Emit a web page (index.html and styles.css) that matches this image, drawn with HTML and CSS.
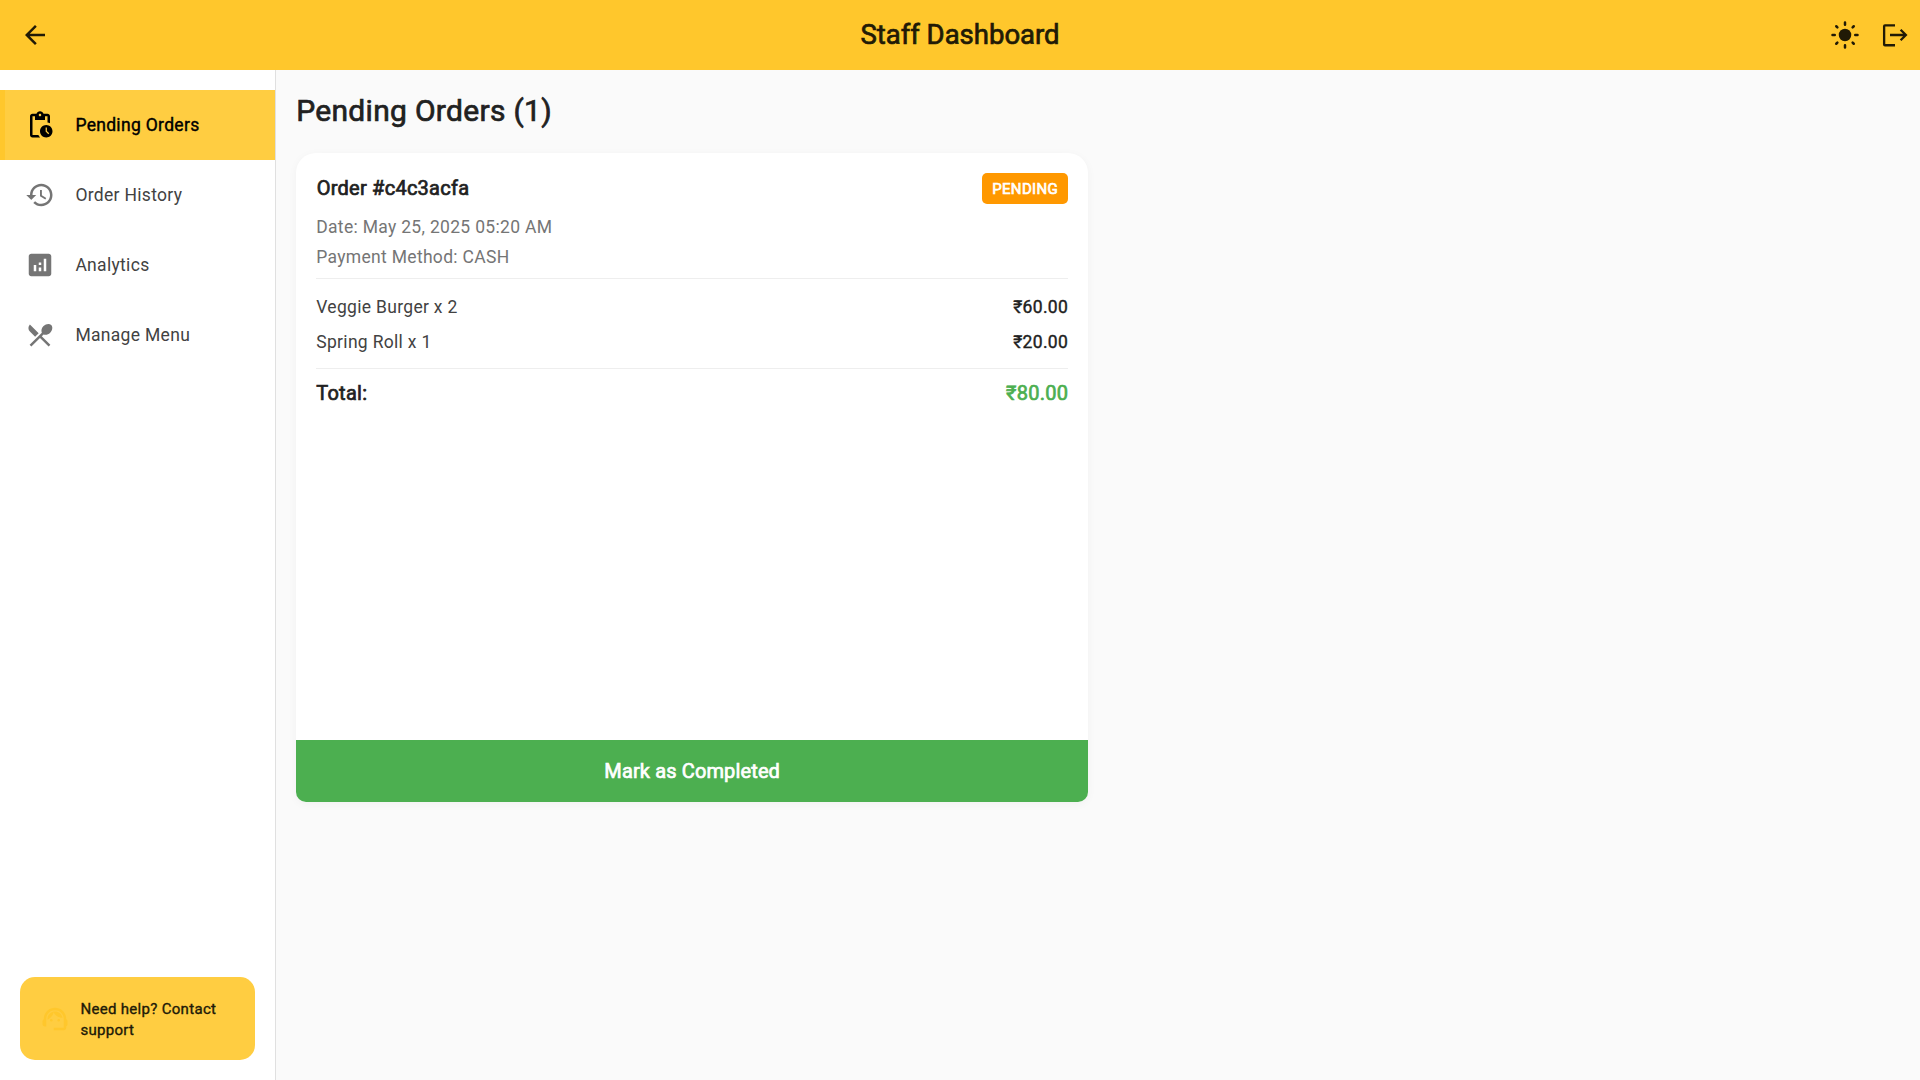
FILE: index.html
```html
<!DOCTYPE html>
<html lang="en">
<head>
<meta charset="utf-8">
<title>Staff Dashboard</title>
<link rel="stylesheet" href="styles.css">
</head>
<body>
<header class="appbar">
  <svg class="icon" viewBox="0 0 24 24"><path d="M20 11H7.83l5.59-5.59L12 4l-8 8 8 8 1.41-1.41L7.83 13H20v-2z"/></svg>
  <h1 class="appbar-title strong"><span>Staff Dashboard</span></h1>
  <div class="actions">
    <svg class="icon" viewBox="0 0 24 24"><circle cx="12" cy="12" r="5"/><path class="rays" d="M12 2v1.8M12 20.2V22M2 12h1.8M20.2 12H22M5 5l.9.9M18.1 18.1l.9.9M5 19l.9-.9M18.1 5.900l.9-.9"/></svg>
    <svg class="icon" viewBox="0 0 24 24"><path class="line" d="M12 4.300H4a.7.7 0 0 0-.7.7v14.500a.7.7 0 0 0 .7.700h8M8 12h12.500M16.500 7.800l4.200 4.200-4.200 4.200"/></svg>
  </div>
</header>
<div class="body">
  <aside class="sidebar">
    <nav class="nav">
      <a class="nav-item active"><svg class="icon" viewBox="0 0 24 24"><path d="M17 12c-2.760 0-5 2.240-5 5s2.240 5 5 5 5-2.240 5-5-2.240-5-5-5zm1.650 7.350L16.500 17.200V14h1v2.790l1.850 1.850-.7.710zM18 3h-3.180C14.400 1.840 13.300 1 12 1s-2.400.840-2.820 2H6c-1.100 0-2 .9-2 2v15c0 1.100.9 2 2 2h6.110c-.590-.570-1.070-1.250-1.420-2H6V5h2v3h8V5h2v5.080c.710.100 1.380.310 2 .6V5c0-1.100-.9-2-2-2zm-6 2c-.550 0-1-.450-1-1s.450-1 1-1 1 .450 1 1-.450 1-1 1z"/></svg><span>Pending Orders</span></a>
      <a class="nav-item"><svg class="icon" viewBox="0 0 24 24"><path d="M13 3c-4.970 0-9 4.030-9 9H1l3.890 3.890.070.140L9 12H6c0-3.870 3.130-7 7-7s7 3.130 7 7-3.130 7-7 7c-1.930 0-3.680-.790-4.940-2.060l-1.420 1.420C8.270 19.990 10.510 21 13 21c4.970 0 9-4.030 9-9s-4.030-9-9-9zm-1 5v5l4.280 2.540.720-1.210-3.500-2.080V8H12z"/></svg><span>Order History</span></a>
      <a class="nav-item"><svg class="icon" viewBox="0 0 24 24"><path d="M19 3H5c-1.100 0-2 .9-2 2v14c0 1.100.9 2 2 2h14c1.100 0 2-.9 2-2V5c0-1.100-.9-2-2-2zM9 17H7v-5h2v5zm4 0h-2v-3h2v3zm0-5h-2v-2h2v2zm4 5h-2V7h2v10z"/></svg><span>Analytics</span></a>
      <a class="nav-item"><svg class="icon" viewBox="0 0 24 24"><path d="M8.100 13.340l2.830-2.830L3.910 3.500c-1.560 1.560-1.560 4.090 0 5.660l4.190 4.180zm6.780-1.810c1.530.710 3.680.210 5.270-1.380 1.910-1.910 2.280-4.650.810-6.120-1.460-1.460-4.200-1.100-6.120.810-1.590 1.590-2.090 3.740-1.380 5.270L3.700 19.870l1.410 1.410L12 14.410l6.880 6.880 1.410-1.410L13.410 13l1.470-1.470z"/></svg><span>Manage Menu</span></a>
    </nav>
    <div class="help">
      <svg class="icon" viewBox="0 0 24 24"><path d="M21 12.220C21 6.730 16.740 3 12 3c-4.690 0-9 3.650-9 9.280-.6.340-1 .980-1 1.720v2c0 1.100.9 2 2 2h1v-6.100c0-3.870 3.130-7 7-7s7 3.130 7 7V19h-8v2h8c1.100 0 2-.9 2-2v-1.220c.590-.310 1-.920 1-1.640v-2.300c0-.7-.410-1.310-1-1.620z"/><circle cx="9" cy="13" r="1"/><circle cx="15" cy="13" r="1"/><path d="M18 11.030C17.520 8.180 15.040 6 12.050 6c-3.030 0-6.290 2.510-6.030 6.450 2.470-1.010 4.330-3.210 4.860-5.890 1.310 2.630 4 4.440 7.120 4.470z"/></svg>
      <p class="help-text">Need help? Contact support</p>
    </div>
  </aside>
  <main class="content">
    <h2 class="heading strong"><span>Pending Orders (1)</span></h2>
    <article class="card">
      <div class="card-body">
        <div class="row head"><span class="order-id strong">Order #c4c3acfa</span><span class="badge strong">PENDING</span></div>
        <p class="meta">Date: May 25, 2025 05:20 AM</p>
        <p class="meta">Payment Method: CASH</p>
        <hr class="rule">
        <div class="row item"><span class="item-name">Veggie Burger x 2</span><span class="price">₹60.00</span></div>
        <div class="row item"><span class="item-name">Spring Roll x 1</span><span class="price">₹20.00</span></div>
        <hr class="rule second">
        <div class="row total strong"><span class="total-label">Total:</span><span class="total-price">₹80.00</span></div>
      </div>
      <button class="complete"><span class="strong">Mark as Completed</span></button>
    </article>
  </main>
</div>
</body>
</html>
```
FILE: styles.css
```css
* { box-sizing: border-box; margin: 0; padding: 0; }
body { width: 1920px; height: 1080px; overflow: hidden; display: flex; flex-direction: column; background: #fafafa; color: #212121; font-family: Roboto, "Noto Sans", sans-serif; }
.strong { font-weight: 400; -webkit-text-stroke: .7px currentColor; }
.icon { width: 30px; height: 30px; flex: none; display: block; fill: currentColor; }
.rays, .line { fill: none; stroke: currentColor; stroke-width: 2; stroke-linecap: round; }
.line { stroke-linecap: butt; stroke-width: 1.850; }
.appbar { height: 70px; flex: none; padding: 0 10px 0 20px; display: grid; grid-template-columns: 80px 1fr 90px; align-items: center; background: #ffc72c; color: rgb(33, 26, 6); }
.appbar-title { text-align: center; font-size: 27.5px; line-height: 35px; padding-bottom: 1px; }
.actions { display: flex; gap: 20px; justify-content: flex-end; }
.body { flex: 1; display: flex; min-height: 0; }
.sidebar { width: 276.250px; flex: none; display: flex; flex-direction: column; justify-content: space-between; padding: 20px 0; background: #fff; border-right: 1px solid #e0e0e0; }
.nav-item { height: 70px; padding-left: 25px; display: flex; align-items: center; gap: 20.400px; color: #757575; font-size: 17.5px; letter-spacing: .31px; }
.nav-item span { color: #424242; }
.nav-item.active { padding-left: 20px; border-left: 5px solid #ffc72c; background: #ffcd41; color: #000; }
.nav-item.active span { color: #000; -webkit-text-stroke: .4px #000; }
.help { margin: 0 20px; height: 83px; padding: 0 20px; border-radius: 15px; display: flex; align-items: center; gap: 10.400px; background: #ffcd41; color: #ffc72c; }
.help-text { padding-top: 2px; color: rgb(33, 26, 8); font-size: 15px; -webkit-text-stroke: .35px currentColor; line-height: 21px; letter-spacing: .31px; }
.content { flex: 1; padding: 20px; }
.heading { height: 42.500px; line-height: 41px; font-size: 30px; letter-spacing: .3px; }
.card { margin-top: 20px; width: 791.900px; height: 649.900px; display: flex; flex-direction: column; border-radius: 20px 20px 10px 10px; overflow: hidden; background: #fff; box-shadow: 0 2px 10px rgba(0, 0, 0, .04); }
.card-body { flex: 1; padding: 20px; }
.row { display: flex; justify-content: space-between; align-items: center; }
.head { height: 31px; margin-bottom: 8.500px; }
.order-id { padding-left: .4px; font-size: 20px; letter-spacing: .25px; }
.badge { height: 31px; padding: 0 10px; border-radius: 5px; background: #ff9800; color: #fff; font-size: 15px; letter-spacing: .35px; line-height: 32px; }
.meta { height: 30px; line-height: 30px; color: #757575; font-size: 17.5px; letter-spacing: .31px; }
.rule { height: 1px; border: 0; margin: 6px 0 10px; background: #eee; }
.item { height: 35px; font-size: 17.5px; }
.item-name { color: #424242; letter-spacing: .31px; }
.price { -webkit-text-stroke: .4px currentColor; letter-spacing: .31px; }
.rule.second { margin: 9px 0 6px; }
.total { height: 35px; font-size: 20px; letter-spacing: .25px; }
.total-price { color: #4caf50; }
.complete { height: 62.500px; padding-bottom: 1px; border: 0; background: #4caf50; color: #fff; font: 400 20px Roboto, sans-serif; letter-spacing: .13px; }
```
